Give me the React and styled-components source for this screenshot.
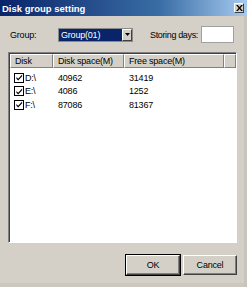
import React from "react";
import styled, { createGlobalStyle } from "styled-components";

const Global = createGlobalStyle`
  html, body { margin: 0; padding: 0; background: #d4d0c8; }
  body {
    font-family: "Liberation Sans", Arial, sans-serif;
    font-size: 9px;
    letter-spacing: -0.2px;
    color: #000;
  }
`;

const disks = [
  { name: "D:\\", size: 40962, free: 31419 },
  { name: "E:\\", size: 4086, free: 1252 },
  { name: "F:\\", size: 87086, free: 81367 },
];

const Window = () => (
  <Frame>
    <TitleBar>
      <Title>Disk group setting</Title>
      <CloseBtn>
        <svg width="7" height="6" viewBox="0 0 8 7">
          <path d="M0 0h2l2 2.2L6 0h2L5 3.5 8 7H6L4 4.8 2 7H0l3-3.5z" fill="#000" />
        </svg>
      </CloseBtn>
    </TitleBar>
    <Body>
      <TopRow>
        <GroupLabel>Group:</GroupLabel>
        <Select>
          <SelectText>Group(01)</SelectText>
          <ArrowBtn>
            <svg width="5" height="3" viewBox="0 0 7 4">
              <path d="M0 0h7L3.5 4z" fill="#000" />
            </svg>
          </ArrowBtn>
        </Select>
        <DaysLabel>Storing days:</DaysLabel>
        <DaysInput />
      </TopRow>
      <ListView>
        <HeaderRow>
          <HeadCell $w={43}>Disk</HeadCell>
          <HeadCell $w={71}>Disk space(M)</HeadCell>
          <HeadCell $w={100}>Free space(M)</HeadCell>
          <HeadCell $grow />
        </HeaderRow>
        {disks.map((d) => (
          <Row key={d.name}>
            <Cell $w={43}>
              <Check>
                <svg width="7" height="7" viewBox="0 0 8 8">
                  <path d="M0.5 3.5l2 2 4.5-5v2L2.5 7.5 0.5 5.5z" fill="#000" />
                </svg>
              </Check>
              {d.name}
            </Cell>
            <Cell $w={71}>{d.size}</Cell>
            <Cell $w={100}>{d.free}</Cell>
          </Row>
        ))}
      </ListView>
      <ButtonRow>
        <Button $default>OK</Button>
        <Button>Cancel</Button>
      </ButtonRow>
    </Body>
  </Frame>
);

export default function App() {
  return (
    <>
      <Global />
      <Window />
    </>
  );
}

const Frame = styled.div`
  width: 247px;
  height: 287px;
  background: #d4d0c8;
  display: flex;
  flex-direction: column;
  overflow: hidden;
`;

const TitleBar = styled.div`
  height: 16px;
  display: flex;
  align-items: center;
  justify-content: space-between;
  padding: 0 3px 0 2px;
  background: linear-gradient(to right, #0a246a, #3a6ea5 65%, #a6caf0);
`;

const Title = styled.div`
  color: #fff;
  font-weight: bold;
  font-size: 9.5px;
  letter-spacing: 0;
`;

const CloseBtn = styled.div`
  width: 10px;
  height: 10px;
  background: #d4d0c8;
  border: 1px solid;
  border-color: #fff #404040 #404040 #fff;
  display: flex;
  align-items: center;
  justify-content: center;
  box-sizing: border-box;
`;

const Body = styled.div`
  flex: 1;
  display: flex;
  flex-direction: column;
  padding: 10px 10px 0 8px;
  box-shadow: inset -3px 0 0 #c8c4bc, inset 0 -4px 0 #ccc8c0;
`;

const TopRow = styled.div`
  display: flex;
  align-items: center;
  height: 17px;
`;

const GroupLabel = styled.span`
  width: 50px;
  padding-left: 2px;
  box-sizing: border-box;
  white-space: nowrap;
`;

const DaysLabel = styled.span`
  margin-left: 17px;
  letter-spacing: -0.35px;
  white-space: nowrap;
`;

const Select = styled.div`
  width: 75px;
  display: flex;
  background: #fff;
  border: 1px solid #8a8a8a;
  box-sizing: border-box;
  height: 14px;
`;

const SelectText = styled.div`
  flex: 1;
  background: #0a246a;
  color: #fff;
  padding-left: 2px;
  line-height: 12px;
  white-space: nowrap;
`;

const ArrowBtn = styled.div`
  width: 10px;
  background: #d4d0c8;
  display: flex;
  align-items: center;
  justify-content: center;
  border: 1px solid;
  border-color: #fff #404040 #404040 #fff;
  box-sizing: border-box;
`;

const DaysInput = styled.div`
  margin-left: 3px;
  width: 33px;
  height: 17px;
  box-sizing: border-box;
  background: #fff;
  border: 1px solid #a0a0a0;
`;

const ListView = styled.div`
  margin-top: 9px;
  height: 191px;
  box-sizing: border-box;
  background: #fff;
  border: 1px solid;
  border-color: #808080 #fff #fff #808080;
  box-shadow: inset 1px 1px 0 #404040;
  padding: 1px 0 0 1px;
`;

const HeaderRow = styled.div`
  display: flex;
  height: 14px;
  background: #d4d0c8;
  margin-bottom: 3px;
`;

const HeadCell = styled.div`
  width: ${(p) => (p.$w ? `${p.$w}px` : "auto")};
  flex: ${(p) => (p.$grow ? 1 : "none")};
  box-sizing: border-box;
  padding-left: 4px;
  line-height: 12px;
  white-space: nowrap;
  border: 1px solid;
  border-color: #fff #808080 #808080 #fff;
`;

const Row = styled.div`
  display: flex;
  height: 13.5px;
  align-items: center;
`;

const Cell = styled.div`
  width: ${(p) => `${p.$w}px`};
  box-sizing: border-box;
  padding-left: 5px;
  display: flex;
  align-items: center;
  gap: 1px;
  white-space: nowrap;
  &:first-child { padding-left: 4px; }
`;

const Check = styled.span`
  width: 10px;
  height: 10px;
  box-sizing: border-box;
  border: 1.5px solid #000;
  display: inline-flex;
  align-items: center;
  justify-content: center;
  background: #fff;
`;

const ButtonRow = styled.div`
  display: flex;
  justify-content: flex-end;
  gap: 3px;
  margin-top: 12px;
`;

const Button = styled.div`
  width: 54px;
  height: 20px;
  box-sizing: border-box;
  display: flex;
  align-items: center;
  justify-content: center;
  background: #d4d0c8;
  border: 1px solid;
  border-color: #fff #404040 #404040 #fff;
  box-shadow: ${(p) =>
    p.$default ? "0 0 0 1px #000, inset -1px -1px 0 #808080" : "inset -1px -1px 0 #808080"};
`;
